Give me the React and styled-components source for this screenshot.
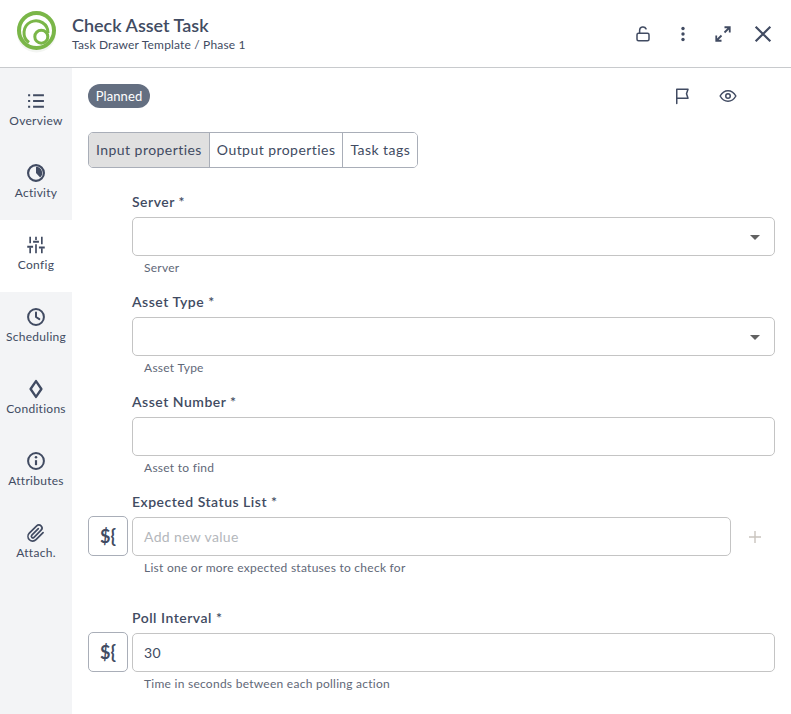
import React from 'react';
import styled, { createGlobalStyle } from 'styled-components';

const GlobalStyle = createGlobalStyle`
  html, body {
    margin: 0;
    padding: 0;
    background: #fff;
    font-family: Lato, "Open Sans", sans-serif;
    color: #414b62;
  }
  * { box-sizing: border-box; }
`;

const Page = styled.div`
  width: 791px;
  height: 714px;
  overflow: hidden;
  display: flex;
  flex-direction: column;
`;

// Header
const Header = styled.header`
  height: 68px;
  flex: none;
  display: flex;
  align-items: center;
  padding: 0 16px;
  border-bottom: 1px solid #c8cacd;
`;

const Titles = styled.div`
  margin-left: 16px;
  flex: 1;
`;

const Title = styled.div`
  font-size: 18px;
  line-height: 22px;
  font-weight: 600;
  color: #414b62;
`;

const Subtitle = styled.div`
  font-size: 12px;
  line-height: 16px;
  color: #414b62;
  margin-top: 1px;
  letter-spacing: 0.17px;
`;

const HeaderActions = styled.div`
  display: flex;
  align-items: center;
  margin-right: -8px;
`;

const IconSlot = styled.div`
  width: 40px;
  height: 40px;
  display: flex;
  align-items: center;
  justify-content: center;
  color: #414b62;
`;

// Body
const Body = styled.div`
  flex: 1;
  display: flex;
  min-height: 0;
`;

const Sidebar = styled.nav`
  width: 72px;
  flex: none;
  padding-top: 8px;
  background: #f3f4f6;
`;

const NavItem = styled.div`
  height: 72px;
  display: flex;
  flex-direction: column;
  align-items: center;
  padding-top: 15px;
  background: ${({ $active }) => ($active ? '#fff' : 'transparent')};
`;

const NavIcon = styled.div`
  width: 20px;
  height: 20px;
  display: flex;
  align-items: center;
  justify-content: center;
  color: #414b62;
`;

const NavLabel = styled.div`
  font-size: 12px;
  line-height: 16px;
  margin-top: 2px;
  color: #414b62;
  white-space: nowrap;
  letter-spacing: 0.28px;
`;

const Content = styled.main`
  flex: 1;
  padding: 16px 16px 0;
`;

const StatusRow = styled.div`
  height: 24px;
  display: flex;
  align-items: center;
  justify-content: space-between;
  padding-right: 27px;
`;

const Chip = styled.span`
  width: 62px;
  height: 24px;
  border-radius: 12px;
  background: #646f81;
  color: #fff;
  font-size: 13px;
  line-height: 24px;
  letter-spacing: 0.1px;
  text-align: center;
`;

const StatusActions = styled.div`
  display: flex;
  gap: 6px;
`;

const Tabs = styled.div`
  display: inline-flex;
  height: 36px;
  margin-top: 24px;
  border: 1px solid #a9aeb8;
  border-radius: 5px;
  overflow: hidden;
  vertical-align: top;
`;

const Tab = styled.div`
  padding: 0 7px;
  font-size: 14px;
  line-height: 34px;
  letter-spacing: 0.45px;
  color: #414b62;
  background: ${({ $active }) => ($active ? '#e0e0e0' : '#fff')};
  & + & {
    border-left: 1px solid #a9aeb8;
  }
`;

const Form = styled.div`
  margin-top: 24px;
`;

const Field = styled.div`
  display: grid;
  grid-template-columns: 40px 1fr;
  column-gap: 4px;
  height: ${({ $height }) => $height}px;
`;

const FieldMain = styled.div`
  grid-column: 2;
  display: flex;
  flex-direction: column;
`;

const Label = styled.label`
  font-size: 14px;
  line-height: 20px;
  font-weight: 600;
  letter-spacing: 0.5px;
  color: #414b62;
  height: 25px;
`;

const InputRow = styled.div`
  display: flex;
  align-items: center;
`;

const InputBox = styled.div`
  position: relative;
  flex: none;
  width: ${({ $narrow }) => ($narrow ? 'calc(100% - 44px)' : '100%')};
  height: 39px;
  border: 1px solid #c4c4c4;
  border-radius: 5px;
  padding: 0 11px;
  font-size: 14px;
  line-height: 37px;
  letter-spacing: 0.35px;
  color: ${({ $placeholder }) => ($placeholder ? '#b4b7bc' : '#414b62')};
`;

const Caret = styled.span`
  position: absolute;
  right: 14px;
  top: 17px;
  width: 0;
  height: 0;
  border-left: 5px solid transparent;
  border-right: 5px solid transparent;
  border-top: 5px solid #616161;
`;

const Help = styled.div`
  font-size: 12px;
  line-height: 16px;
  margin-top: 4px;
  padding-left: 12px;
  color: #5f6878;
  letter-spacing: 0.26px;
`;

const ExpressionButton = styled.div`
  grid-column: 1;
  align-self: start;
  margin-top: 24px;
  width: 40px;
  height: 40px;
  border: 1px solid #a9aeb8;
  border-radius: 5px;
  display: flex;
  align-items: center;
  justify-content: center;
  font-size: 18px;
  font-weight: 700;
  color: #414b62;
`;

const AddSlot = styled.div`
  width: 44px;
  height: 39px;
  flex: none;
  display: flex;
  align-items: center;
  justify-content: flex-end;
  padding-right: 13px;
`;

const Logo = () => (
  <svg width="40" height="45" viewBox="0 0 40 45" fill="none">
    <circle cx="20.500" cy="22" r="19.500" fill="#f3f5f2" />
    <circle cx="20.500" cy="19.500" r="17.500" fill="#fff" stroke="#7ab648" strokeWidth="4" />
    <path d="M13 31.500A12 12 0 1 1 32 22" stroke="#7ab648" strokeWidth="3" />
    <circle cx="25.300" cy="25.700" r="6.500" stroke="#7ab648" strokeWidth="3" />
  </svg>
);

const Svg = ({ size = 20, children, strokeWidth = 2 }) => (
  <svg
    width={size}
    height={size}
    viewBox="0 0 24 24"
    fill="none"
    stroke="currentColor"
    strokeWidth={strokeWidth}
    strokeLinecap="round"
    strokeLinejoin="round"
  >
    {children}
  </svg>
);

const navItems = [
  {
    label: 'Overview',
    icon: (
      <Svg>
        <path d="M8.500 5h13M8.500 12h13M8.500 19h13" strokeWidth="2.400" strokeLinecap="butt" />
        <path d="M2.500 5h2.500M2.500 12h2.500M2.500 19h2.500" strokeWidth="2.400" strokeLinecap="butt" />
      </Svg>
    ),
  },
  {
    label: 'Activity',
    icon: (
      <Svg>
        <circle cx="12" cy="12" r="9.500" strokeWidth="2.600" />
        <path d="M12 4.500a7.500 7.500 0 0 1 5 13L12 12z" fill="currentColor" stroke="none" />
      </Svg>
    ),
  },
  {
    label: 'Config',
    active: true,
    icon: (
      <Svg>
        <path d="M5 2v8M5 15v7M12 2v4M12 11v11M19 2v9M19 16v6" strokeWidth="2" strokeLinecap="butt" />
        <path d="M1.500 14h7M8.500 8h7M15.500 15h7" strokeWidth="2.400" strokeLinecap="butt" />
      </Svg>
    ),
  },
  {
    label: 'Scheduling',
    icon: (
      <Svg>
        <circle cx="12" cy="12" r="9.500" strokeWidth="2.400" />
        <path d="M12 6.500V12l4 2.500" strokeWidth="2.400" />
      </Svg>
    ),
  },
  {
    label: 'Conditions',
    icon: (
      <Svg>
        <path d="M12 2.500 18.500 12 12 21.500 5.500 12z" strokeWidth="2.800" />
      </Svg>
    ),
  },
  {
    label: 'Attributes',
    icon: (
      <Svg>
        <circle cx="12" cy="12" r="9.500" strokeWidth="2.400" />
        <path d="M12 11v6" strokeWidth="2.600" strokeLinecap="butt" />
        <circle cx="12" cy="7.500" r="1.500" fill="currentColor" stroke="none" />
      </Svg>
    ),
  },
  {
    label: 'Attach.',
    icon: (
      <Svg>
        <path d="M20.500 11.500 12 20a5.500 5.500 0 0 1-8-7.800l8.800-8.800a3.700 3.700 0 0 1 5.300 5.200l-8.500 8.600a1.800 1.800 0 0 1-2.600-2.600l7.800-7.800" strokeWidth="2" />
      </Svg>
    ),
  },
];

const App = () => {
  return (
    <Page>
      <GlobalStyle />
      <Header>
        <Logo />
        <Titles>
          <Title>Check Asset Task</Title>
          <Subtitle>Task Drawer Template / Phase 1</Subtitle>
        </Titles>
        <HeaderActions>
          <IconSlot>
            <Svg size={18}>
              <rect x="4" y="11" width="16" height="10" rx="2" />
              <path d="M7.500 11V7a4.500 4.500 0 0 1 8.600-1.800" />
            </Svg>
          </IconSlot>
          <IconSlot>
            <svg width="18" height="18" viewBox="0 0 18 18" fill="currentColor">
              <circle cx="9" cy="3.500" r="1.700" />
              <circle cx="9" cy="9" r="1.700" />
              <circle cx="9" cy="14.500" r="1.700" />
            </svg>
          </IconSlot>
          <IconSlot>
            <Svg size={18} strokeWidth={2.400}>
              <path d="M14 3h7v7M21 3l-7 7M10 21H3v-7M3 21l7-7" strokeLinecap="butt" strokeLinejoin="miter" />
            </Svg>
          </IconSlot>
          <IconSlot>
            <Svg size={22} strokeWidth={2.400}>
              <path d="M4 4l16 16M20 4 4 20" strokeLinecap="butt" />
            </Svg>
          </IconSlot>
        </HeaderActions>
      </Header>
      <Body>
        <Sidebar>
          {navItems.map((item) => (
            <NavItem key={item.label} $active={item.active}>
              <NavIcon>{item.icon}</NavIcon>
              <NavLabel>{item.label}</NavLabel>
            </NavItem>
          ))}
        </Sidebar>
        <Content>
          <StatusRow>
            <Chip>Planned</Chip>
            <StatusActions>
              <IconSlot>
                <Svg size={18}>
                  <path d="M5 22V3h15l-2 6 2 6H5" />
                </Svg>
              </IconSlot>
              <IconSlot>
                <Svg size={18}>
                  <path d="M1.500 12S5.500 5 12 5s10.500 7 10.500 7-4 7-10.500 7S1.500 12 1.500 12z" />
                  <circle cx="12" cy="12" r="3" />
                </Svg>
              </IconSlot>
            </StatusActions>
          </StatusRow>
          <Tabs>
            <Tab $active>Input properties</Tab>
            <Tab>Output properties</Tab>
            <Tab>Task tags</Tab>
          </Tabs>
          <Form>
            <Field $height={100}>
              <FieldMain>
                <Label>Server *</Label>
                <InputBox>
                  <Caret />
                </InputBox>
                <Help>Server</Help>
              </FieldMain>
            </Field>
            <Field $height={100}>
              <FieldMain>
                <Label>Asset Type *</Label>
                <InputBox>
                  <Caret />
                </InputBox>
                <Help>Asset Type</Help>
              </FieldMain>
            </Field>
            <Field $height={100}>
              <FieldMain>
                <Label>Asset Number *</Label>
                <InputBox />
                <Help>Asset to find</Help>
              </FieldMain>
            </Field>
            <Field $height={116}>
              <ExpressionButton>{'${'}</ExpressionButton>
              <FieldMain>
                <Label>Expected Status List *</Label>
                <InputRow>
                  <InputBox $placeholder $narrow>Add new value</InputBox>
                  <AddSlot>
                    <svg width="14" height="14" viewBox="0 0 14 14" stroke="#c9c4be" strokeWidth="1.400">
                      <path d="M7 1v12M1 7h12" />
                    </svg>
                  </AddSlot>
                </InputRow>
                <Help>List one or more expected statuses to check for</Help>
              </FieldMain>
            </Field>
            <Field $height={80}>
              <ExpressionButton>{'${'}</ExpressionButton>
              <FieldMain>
                <Label>Poll Interval *</Label>
                <InputBox>30</InputBox>
                <Help>Time in seconds between each polling action</Help>
              </FieldMain>
            </Field>
          </Form>
        </Content>
      </Body>
    </Page>
  );
};

export default App;
